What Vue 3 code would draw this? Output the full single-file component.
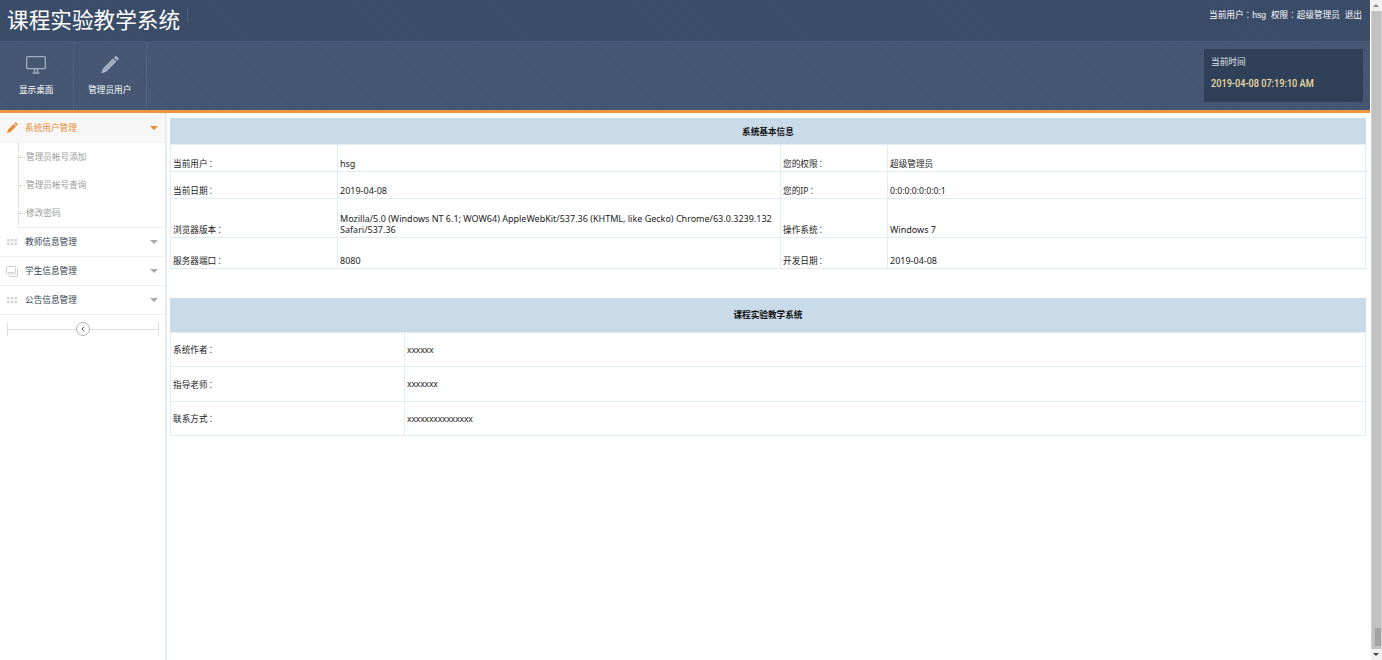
<script setup>
const groups = [
  { label: '教师信息管理', icon: 'grid' },
  { label: '学生信息管理', icon: 'images' },
  { label: '公告信息管理', icon: 'grid' },
]
const children = ['管理员帐号添加', '管理员帐号查询', '修改密码']
const infoRows = [
  ['当前用户', 'hsg', '您的权限', '超级管理员'],
  ['当前日期', '2019-04-08', '您的IP', '0:0:0:0:0:0:0:1'],
  ['浏览器版本', 'Mozilla/5.0 (Windows NT 6.1; WOW64) AppleWebKit/537.36 (KHTML, like Gecko) Chrome/63.0.3239.132 Safari/537.36', '操作系统', 'Windows 7'],
  ['服务器端口', '8080', '开发日期', '2019-04-08'],
]
const authorRows = [
  ['系统作者', 'xxxxxx'],
  ['指导老师', 'xxxxxxx'],
  ['联系方式', 'xxxxxxxxxxxxxxx'],
]
const isWide = (text) => /^[\x20-\x7e]+$/.test(text) && !text.startsWith('0:')
</script>

<template>
  <div class="window">
    <div class="page">
      <header>
        <div class="titlebar">
          <h1>课程实验教学系统</h1>
          <i class="divider"></i>
          <div class="user">当前用户<span class="colon">：</span>hsg&nbsp; 权限<span class="colon">：</span>超级管理员&nbsp; 退出</div>
        </div>
        <div class="toolbar">
          <div class="tool">
            <svg width="22" height="20" viewBox="0 0 22 20" fill="none" stroke="#a3afc1" stroke-width="1.3">
              <rect x="1.7" y="1.7" width="18.6" height="12" rx="1" />
              <path d="M9.500 14v3M12.500 14v3M7.500 18h7" />
            </svg>
            <span>显示桌面</span>
          </div>
          <div class="tool">
            <svg width="22" height="20" viewBox="0 0 22 20" fill="#a9b4c4">
              <path d="M2 18.500 4 13.500 14.200 3.200 17.500 6.500 7.200 16.800ZM15 2.400l1.200-1.200q.8-.6 1.600.1l1.600 1.600q.7.800 0 1.500L18.300 5.700Z" />
              <path d="M5.700 14.900 15.700 5" stroke="#7484a0" stroke-width=".7" />
            </svg>
            <span>管理员用户</span>
          </div>
          <div class="clock">
            <div>当前时间</div>
            <b>2019-04-08 07:19:10 AM</b>
          </div>
        </div>
      </header>
      <div class="body">
        <aside>
          <div class="group active">
            <svg class="gicon" width="12" height="12" viewBox="0 0 12 12" fill="#e88a35">
              <path d="M1 11 2 7.700 7.800 2l2.300 2.300L4.300 10ZM8.400 1.400l.8-.8q.5-.4 1 0l1.300 1.300q.4.500 0 1l-.8.800Z" />
            </svg>
            <span>系统用户管理</span><i class="caret"></i>
          </div>
          <ul>
            <li v-for="c in children" :key="c">{{ c }}</li>
          </ul>
          <div v-for="g in groups" :key="g.label" class="group">
            <svg v-if="g.icon === 'grid'" class="gicon" width="12" height="12" viewBox="0 0 12 12" fill="#d6d6d6">
              <path d="M1 3h2.600v2.600H1zM4.700 3h2.600v2.600H4.700zM8.400 3H11v2.600H8.400zM1 6.700h2.600v2.600H1zM4.700 6.700h2.600v2.600H4.700zM8.400 6.700H11v2.600H8.400z" />
            </svg>
            <svg v-else class="gicon" width="12" height="12" viewBox="0 0 12 12" fill="none" stroke="#d0d0d0">
              <rect x=".5" y="1.500" width="9" height="7.500" rx=".8" />
              <path d="M2 7.500h6M11.500 3.500v8H3" />
            </svg>
            <span>{{ g.label }}</span><i class="caret"></i>
          </div>
          <div class="collapse">
            <svg width="152" height="16" viewBox="0 0 152 16" fill="none" stroke="#dfdfdf">
              <path d="M.5 1v14M151.500 1v14M1 8.500h150" />
              <circle cx="76" cy="8" r="6.500" fill="#fff" stroke="#b0b0b0" />
              <path d="M77.200 5.700 75 8l2.200 2.300" stroke="#555" />
            </svg>
          </div>
        </aside>
        <main>
          <section class="info">
            <h2>系统基本信息</h2>
            <div v-for="r in infoRows" :key="r[0]" class="row">
              <div v-for="(c, i) in r" :key="i" class="cell" :class="{ wide: isWide(c) }"><span>{{ c }}<span v-if="i % 2 === 0" class="colon">：</span></span></div>
            </div>
          </section>
          <section class="author">
            <h2>课程实验教学系统</h2>
            <div v-for="r in authorRows" :key="r[0]" class="row">
              <div v-for="(c, i) in r" :key="i" class="cell"><span>{{ c }}<span v-if="i === 0" class="colon">：</span></span></div>
            </div>
          </section>
        </main>
      </div>
    </div>
    <div class="scrollbar">
      <i class="arrow up"></i>
      <div class="track"><div class="thumb"></div></div>
      <i class="arrow down"></i>
    </div>
  </div>
</template>

<style>
body { margin: 0; background: #fff; overflow: hidden; }
</style>

<style scoped>
* { box-sizing: border-box; }
.window { display: flex; width: 1382px; height: 660px; overflow: hidden; font: 8.65px/12px "Noto Sans", "Noto Sans CJK SC", sans-serif; color: #222; }
.colon { font-family: "Noto Sans CJK TC", sans-serif; margin-left: -1px; }
.page { width: 1370px; display: flex; flex-direction: column; }
header { color: #fff; border-bottom: 3px solid #ee9440; height: 113px; font-family: "Liberation Sans", "Noto Sans CJK SC", sans-serif; }
.titlebar { height: 42px; display: flex; align-items: flex-start; padding: 0 8px 0 7px; border-bottom: 1px solid #495b78; background: repeating-linear-gradient(45deg, #394a66 0 1px, #3c4d6a 1px 3px); }
h1 { margin: 4px 0 0; font-size: 21.65px; line-height: 34px; font-weight: 400; white-space: nowrap; }
.divider { width: 1px; height: 14px; margin: 8px 0 0 7px; background: #4a5f85; }
.user { margin: 8px 0 0 auto; white-space: nowrap; }
.user .colon { margin-left: 0; }
.toolbar { height: 68px; display: flex; background: repeating-linear-gradient(45deg, #435571 0 1px, #465874 1px 3px); }
.tool { width: 73.500px; border-right: 1px solid #52647f; display: flex; flex-direction: column; align-items: center; padding-top: 13px; }
.tool span { margin-top: 9px; }
.clock { width: 159px; height: 53px; margin: 7px 7px 0 auto; padding: 7px 7px; background: #304059; color: #e4e8ee; }
.clock b { display: block; margin-top: 10px; font: 500 10.200px/12px Roboto, sans-serif; color: #eedda6; white-space: nowrap; transform: scaleX(.9); transform-origin: 0 50%; }
.body { flex: 1; display: flex; }
aside { width: 167px; border-right: 2px solid #e6edf2; }
.group { height: 29px; display: flex; align-items: center; padding: 0 7px 0 6px; border-bottom: 1px solid #efefef; color: #333f50; }
.group span { margin-left: 7px; flex: 1; }
.active { height: 30px; background: #f7f7f7; color: #e88a35; border-bottom-color: #f3f3f3; }
.caret { border: 4px solid transparent; border-top-color: #aaa; border-bottom: 0; }
.active .caret { border-top-color: #e88a35; }
ul { list-style: none; margin: 0 0 0 18px; padding: 0; height: 85px; border-left: 1px dotted #ccc; border-bottom: 1px solid #efefef; }
li { height: 28px; padding-left: 7px; color: #999; display: flex; align-items: center; position: relative; }
li::before { content: ""; position: absolute; left: 0; width: 6px; border-top: 1px dotted #ccc; }
.collapse { padding: 6px 0 0 7px; }
main { flex: 1; padding: 5px 4px 0 3px; }
section { border: 1px solid #e0edf4; border-top: 0; }
h2 { margin: 0 -1px; background: #c9dbe8; font-size: 8.65px; font-weight: 700; text-align: center; color: #111; }
.info h2 { height: 26px; line-height: 28px; }
.author h2 { height: 34px; line-height: 35px; }
.row { display: grid; border-top: 1px solid #e0edf4; }
.info .row { grid-template-columns: 166px 443px 107px 1fr; height: 27px; }
.info .row:nth-child(4) { height: 39px; }
.info .row:nth-child(5) { height: 31px; }
.cell { padding: 0 3px .6px 2px; border-left: 1px solid #e0edf4; display: flex; align-items: flex-end; line-height: 11.500px; }
.cell:first-child { border-left: 0; }
.wide { font-size: 9px; padding-bottom: 1.400px; }
.author { margin-top: 29px; }
.author .row { grid-template-columns: 233px 1fr; height: 34.400px; }
.author .cell { align-items: center; padding: 2px 3px 0 2px; }
.author .cell:last-child { letter-spacing: -.18px; }
.scrollbar { width: 12px; display: flex; flex-direction: column; align-items: flex-end; background: #f1f1f1; border-left: 1px solid #fff; }
.track { flex: 1; width: 100%; background: #c1c1c1; border-left: 1px solid #d2d2d2; border-right: 1px solid #d2d2d2; display: flex; align-items: flex-end; justify-content: flex-end; }
.thumb { width: 6px; height: 18px; background: #a3a3a3; margin-bottom: 3px; }
.arrow { border: 3px solid transparent; margin: 4px 3px; }
.up { border-bottom-color: #888; border-top: 0; }
.down { border-top-color: #444; border-bottom: 0; }
</style>
